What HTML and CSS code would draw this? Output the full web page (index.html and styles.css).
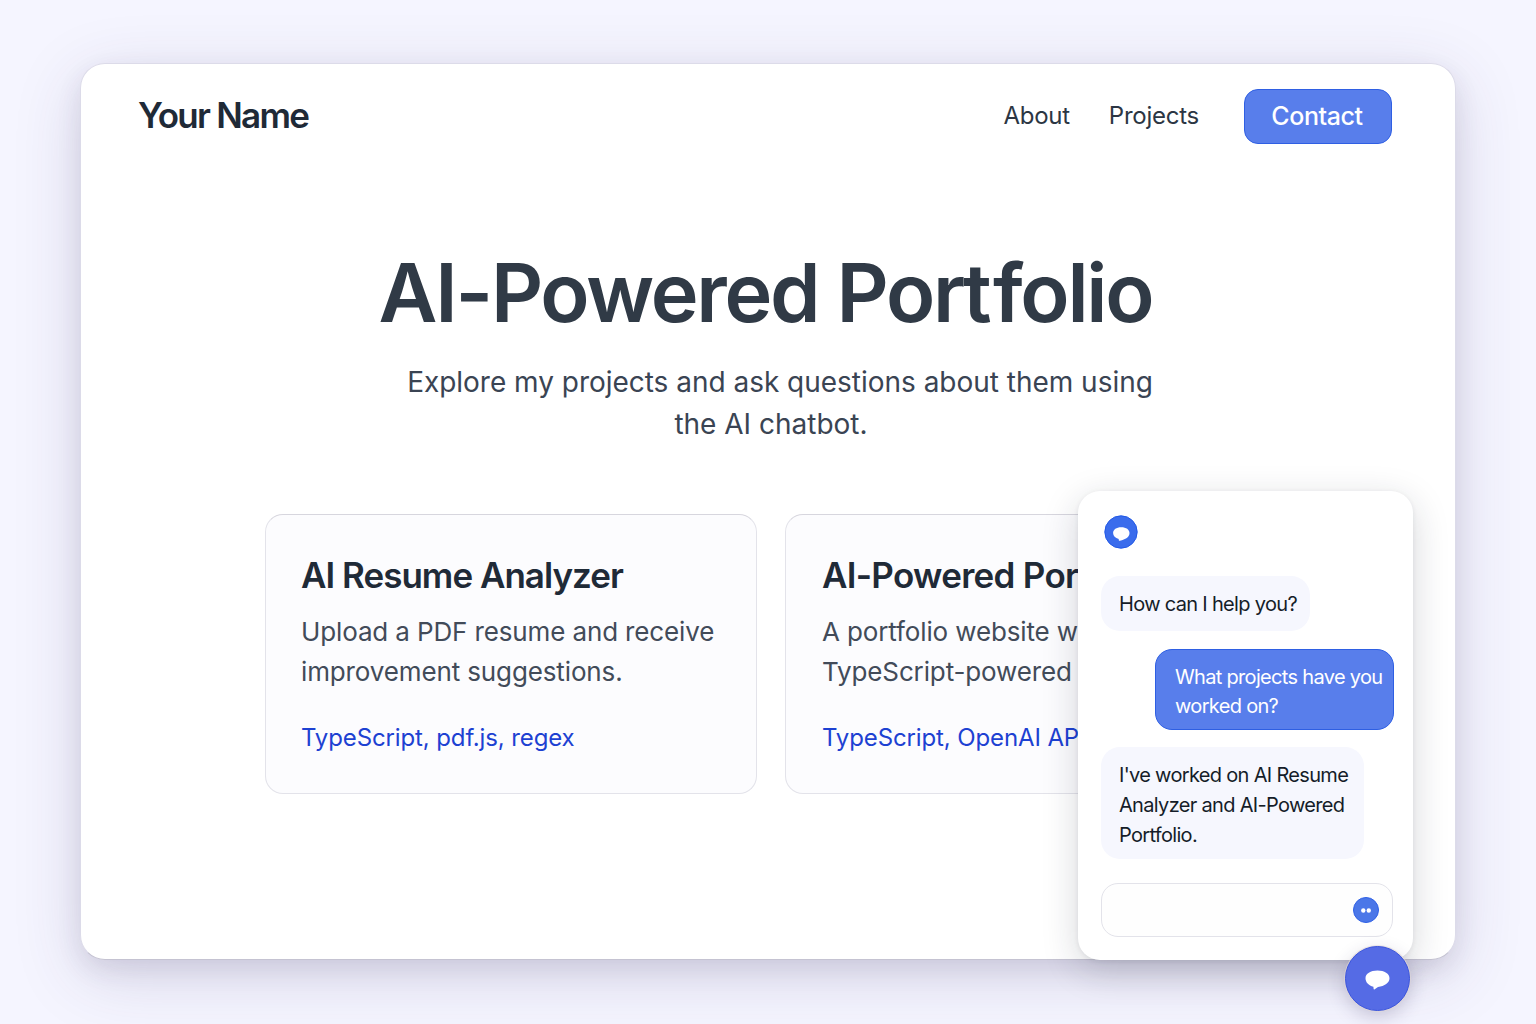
FILE: index.html
```html
<!DOCTYPE html>
<html lang="en">
<head>
<meta charset="utf-8">
<title>AI-Powered Portfolio</title>
<link rel="stylesheet" href="styles.css">
</head>
<body>
<div class="window">
  <header class="header">
    <div class="brand">Your Name</div>
    <nav class="nav">
      <a class="nav-link about">About</a>
      <a class="nav-link projects">Projects</a>
      <a class="contact">Contact</a>
    </nav>
  </header>
  <main class="main">
    <h1 class="title">AI-Powered Por<span class="loose">t</span>folio</h1>
    <p class="subtitle"><span class="lead-line">Explore my projects and ask questions about them using</span><br>the AI chatbot.</p>
    <section class="cards">
      <article class="card">
        <h2 class="card-title">AI Resume Analyzer</h2>
        <p class="card-text">Upload a PDF resume and receive<br>improvement suggestions.</p>
        <p class="card-tech">TypeScript, pdf.js, regex</p>
      </article>
      <article class="card">
        <h2 class="card-title card-title-wide">AI-Powered Portfolio</h2>
        <p class="card-text">A portfolio website with a<br>TypeScript-powered chatbot.</p>
        <p class="card-tech">TypeScript, OpenAI API</p>
      </article>
    </section>
  </main>
</div>
<aside class="chat">
  <svg class="avatar" viewBox="0 0 34 34"><circle cx="17" cy="17" r="16.200"/><path d="M17.200 12.300c5 0 8.300 2.300 8.300 5.700 0 4-4 6.500-9.600 7.700-.9.300-1.200-.1-1.200-1.700-3.400-.8-5.600-2.800-5.600-5.900 0-3.500 3.300-5.800 8.100-5.800z"/></svg>
  <div class="bubble bot first">How can I help you?</div>
  <div class="bubble user">What projects have you<br>worked on?</div>
  <div class="bubble bot last">I've worked on AI Resume<br>Analyzer and AI-Powered<br>Portfolio.</div>
  <div class="input"><svg class="send" viewBox="0 0 26 26"><circle cx="13" cy="13" r="12.500"/><circle class="dot" cx="10.300" cy="13.500" r="2.200"/><circle class="dot" cx="15.800" cy="13.500" r="2.200"/></svg></div>
</aside>
<div class="fab"><svg class="fab-icon" viewBox="0 0 25 20"><path d="M12.500 .6c7 0 12 3.200 12 7.600 0 4.600-5 7.700-11.500 8.900l-3.300 2.200c-.7.400-1.100.1-1.100-.6l-.2-2C3.600 15.500.5 12.200.5 8.200.5 3.800 5.500 .6 12.500 .6z"/></svg></div>
</body>
</html>
```
FILE: styles.css
```css
* { box-sizing: border-box; margin: 0; padding: 0; }
body {
  position: relative;
  width: 1536px;
  height: 1024px;
  overflow: hidden;
  padding: 63px 80px;
  background: #f5f5ff;
  font-family: Inter, "Liberation Sans", sans-serif;
  color: #1f2a37;
}
.window {
  width: 1376px;
  height: 897px;
  border: 1px solid #dcdbe9;
  border-bottom-color: #c5c3d2;
  border-radius: 25px;
  background: #fff;
  box-shadow: 0 16px 66px rgba(60, 50, 100, .17), 0 10px 24px rgba(60, 50, 90, .1);
}
.header { display: flex; justify-content: space-between; align-items: flex-start; height: 105px; padding: 25px 63px 0 57px; }
.brand { font-size: 35px; font-weight: 600; line-height: 53px; letter-spacing: -1.75px; }
.nav { display: flex; align-items: flex-start; }
.nav-link { font-size: 24px; line-height: 53px; color: #2c3643; letter-spacing: -.25px; }
.about { margin-right: 39px; }
.projects { margin-right: 45px; }
.contact { width: 148px; height: 55px; border: 1px solid #2f5fe3; border-radius: 14px; background: #587eeb; color: #fff; font-size: 25px; font-weight: 500; line-height: 53px; text-align: center; letter-spacing: -.4px; padding-right: 2px; }
.main { padding: 75px 178px 0 184px; }
.title { padding-right: 11px; font-size: 81px; font-weight: 600; line-height: 98px; letter-spacing: -2.25px; text-align: center; color: #303a46; white-space: nowrap; }
.loose { letter-spacing: 1.5px; }
.subtitle { margin-top: 19px; font-size: 28px; line-height: 42px; text-align: center; color: #3a4453; white-space: nowrap; }
.lead-line { padding-left: 18px; letter-spacing: -.02px; }
.cards { display: grid; grid-template-columns: 492px 492px; gap: 28px; margin-top: 69px; }
.card { height: 280px; border: 1px solid #e3e3ea; border-top-color: #d7d6de; border-radius: 18px; background: #fcfcfe; padding: 38px 35px; white-space: nowrap; }
.card + .card { padding-left: 36px; }
.card-title { font-size: 35px; font-weight: 600; line-height: 44px; letter-spacing: -.98px; }
.card-title-wide { letter-spacing: -.7px; }
.card-text { margin-top: 15px; font-size: 26px; line-height: 40px; letter-spacing: -.13px; color: #424b59; }
.card-tech { margin-top: 30px; font-size: 24px; line-height: 32px; letter-spacing: -.12px; color: #1d41d2; }
.chat { position: absolute; left: 1078px; top: 491px; width: 335px; height: 469px; padding: 24px 20px 0 23px; border-radius: 22px; background: #fff; box-shadow: 0 10px 36px rgba(30, 35, 50, .18), 0 1px 5px rgba(30, 35, 50, .08); display: flex; flex-direction: column; align-items: flex-start; color: #151d29; }
.avatar { width: 34px; height: 34px; margin-left: 2.5px; flex: none; fill: #fff; }
.avatar circle { fill: #3a6cec; stroke: #2259e6; }
.bubble { font-size: 20px; letter-spacing: -.68px; border-radius: 19px; white-space: nowrap; flex: none; }
.bot { background: #f6f7fe; padding: 0 18px; line-height: 30px; }
.first { margin-top: 27px; width: 209px; height: 55px; line-height: 56px; }
.user { align-self: flex-end; margin: 18px -1px 0 0; width: 239px; height: 81px; padding: 13px 0 0 19px; border: 1px solid #2e5fe3; background: #587eeb; color: #fff; line-height: 29px; border-radius: 17px; }
.last { margin-top: 17px; width: 263px; height: 112px; padding-top: 13px; }
.input { display: flex; align-items: center; justify-content: flex-end; flex: none; width: 292px; height: 54px; margin-top: 24px; padding-right: 13px; border: 1px solid #e3e3ea; border-radius: 17px; background: #fefefe; }
.send { width: 26px; height: 26px; fill: #4b77e8; stroke: #2f60e6; }
.send .dot { fill: #fff; stroke: none; }
.fab { position: absolute; left: 1345px; top: 946px; width: 65px; height: 65px; border: 1px solid #3b55dc; border-radius: 50%; background: #556be5; box-shadow: 0 0 0 1px rgba(225, 215, 215, .6), 0 6px 18px rgba(50, 40, 90, .22); display: flex; align-items: center; justify-content: center; }
.fab-icon { width: 25px; height: 20px; margin-top: 3px; fill: #fff; }
```
